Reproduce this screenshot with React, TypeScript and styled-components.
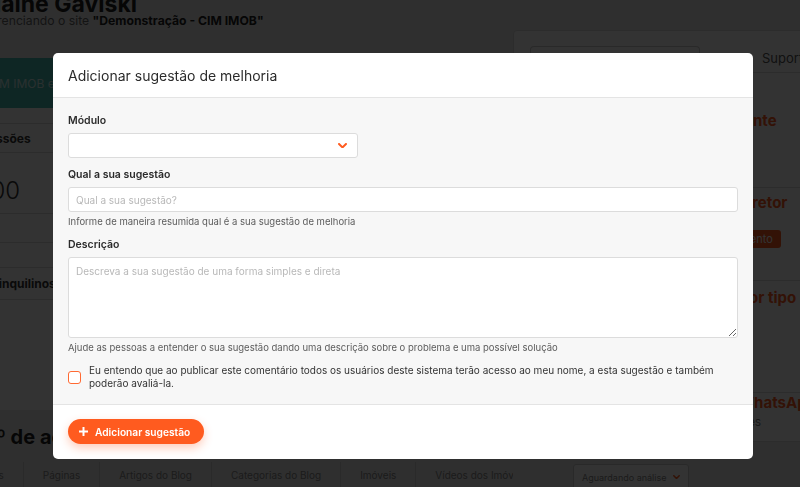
import React from 'react';
import styled, {createGlobalStyle} from 'styled-components';

const GlobalStyle = createGlobalStyle`
  * { box-sizing: border-box; }
  html, body { margin: 0; height: 100%; overflow: hidden; }
  body {
    font-family: Inter, 'Noto Sans', sans-serif;
    background: #ebebeb;
    color: #333;
  }
`;

const ORANGE = '#ff5b1f';

/* ---------- page behind the modal ---------- */

const Page = styled.div`
  display: grid;
  grid-template-columns: 548px 340px;
  margin: -4px 0 0 -35px;
  width: 900px;
`;

const LeftColumn = styled.div`
  padding-left: 16px;
  overflow: hidden;
`;

const Greeting = styled.h1`
  margin: 0;
  font-size: 23px;
  line-height: 17px;
  font-weight: 700;
  color: #222;
`;

const Subtitle = styled.p`
  margin: 0;
  font-size: 12.2px;
  line-height: 16px;
  color: #666;
  strong {
    color: #222;
  }
`;

const Banner = styled.div`
  margin: 29px 0 0 -16px;
  height: 50px;
  padding: 0 22px;
  display: flex;
  align-items: center;
  background: #47bdb5;
  color: rgba(255, 255, 255, 0.75);
  font-size: 12px;
  white-space: nowrap;
`;

const StatsCard = styled.div`
  margin-left: -16px;
  padding: 15px 0 15px 16px;
  background: #fff;
`;

const StatHead = styled.div<{$h?: number}>`
  height: ${(p) => p.$h ?? 30}px;
  display: flex;
  align-items: center;
  border-top: 1px solid #ddd;
  border-bottom: 1px solid #ddd;
  font-size: 12px;
  font-weight: 700;
  white-space: nowrap;
`;

const StatValue = styled.div<{$h: number}>`
  height: ${(p) => p.$h}px;
  padding-top: 14px;
  display: flex;
  align-items: center;
  font-size: 24px;
  font-weight: 300;
`;

const StatFoot = styled.div`
  height: 30px;
  border-top: 1px solid #ddd;
  border-bottom: 1px solid #ddd;
  margin-bottom: 24px;
`;

const SectionTitle = styled.h2`
  margin: 14px 0 4px;
  font-size: 20px;
  line-height: 26px;
  font-weight: 700;
  color: #222;
  white-space: nowrap;
`;

const TabStrip = styled.div`
  display: flex;
  height: 40px;
  margin-left: -35px;
  padding-top: 8px;
  white-space: nowrap;
`;

const Tab = styled.div`
  padding: 6px 19px 0;
  line-height: 14px;
  border-right: 1px solid #d0d0d0;
  font-size: 10px;
  color: #888;
`;

const RightColumn = styled.div`
  margin-top: 34px;
`;

const SideCard = styled.div`
  background: #fff;
  border: 1px solid #ddd;
  border-radius: 4px;
  padding: 0 16px 10px;
`;

const SideTabs = styled.div`
  height: 42px;
  display: flex;
  align-items: flex-end;
  gap: 62px;
  border-bottom: 1px solid #ddd;
`;

const SearchBox = styled.div`
  width: 170px;
  height: 26px;
  border: 1px solid #ccc;
  border-bottom: none;
  border-radius: 4px 4px 0 0;
`;

const SideTab = styled.span`
  padding-bottom: 6px;
  font-size: 13px;
  color: #555;
`;

const SideSection = styled.div<{$h: number; $pt: number; $last?: boolean}>`
  height: ${(p) => p.$h}px;
  padding-top: ${(p) => p.$pt}px;
  border-bottom: ${(p) => (p.$last ? 'none' : '1px solid #ddd')};
`;

const SideTitle = styled.div`
  font-size: 15px;
  line-height: 20px;
  font-weight: 700;
  color: ${ORANGE};
  white-space: nowrap;
`;

const SideText = styled.div`
  font-size: 12px;
  line-height: 18px;
  color: #777;
  white-space: nowrap;
`;

const SideButton = styled.span`
  display: inline-block;
  margin: 17px 0 0 169px;
  height: 18px;
  padding: 0 8px;
  line-height: 18px;
  border-radius: 3px;
  background: ${ORANGE};
  color: #fff;
  font-size: 11px;
`;

const FilterRow = styled.div`
  padding: 22px 0 0 60px;
`;

const FilterSelect = styled.div`
  width: 116px;
  height: 26px;
  display: flex;
  align-items: center;
  justify-content: space-between;
  padding: 0 8px;
  border: 1px solid #ccc;
  border-radius: 3px;
  background: #fff;
  font-size: 9px;
  color: #888;
`;

/* ---------- modal ---------- */

const Overlay = styled.div`
  position: fixed;
  inset: 0;
  background: rgba(0, 0, 0, 0.8);
  padding: 53px 0 0 53px;
`;

const Modal = styled.div`
  width: 700px;
  background: #fff;
  border-radius: 5px;
  overflow: hidden;
`;

const ModalHeader = styled.div`
  height: 45px;
  display: flex;
  align-items: center;
  padding: 0 15px;
  border-bottom: 1px solid #e4e4e4;
`;

const ModalTitle = styled.h2`
  margin: 0;
  font-size: 14px;
  font-weight: 400;
  color: #2b2b2b;
`;

const ModalBody = styled.div`
  background: #f7f7f7;
  padding: 16px 15px 14px;
`;

const Field = styled.div<{$gap?: number}>`
  margin-top: ${(p) => p.$gap ?? 0}px;
`;

const Label = styled.label`
  display: block;
  margin-bottom: 5px;
  font-size: 10.5px;
  line-height: 14px;
  font-weight: 600;
  color: #2b2b2b;
`;

const SelectBox = styled.div`
  width: 290px;
  height: 25px;
  display: flex;
  align-items: center;
  justify-content: flex-end;
  padding-right: 10px;
  background: #fff;
  border: 1px solid #dcdcdc;
  border-radius: 3px;
`;

const TextInput = styled.input`
  display: block;
  width: 100%;
  height: 25px;
  padding: 0 7px;
  background: #fff;
  border: 1px solid #dcdcdc;
  border-radius: 3px;
  font-family: inherit;
  font-size: 10px;
  color: #333;
  outline: none;
  &::placeholder {
    color: #b8b8b8;
  }
`;

const TextArea = styled.textarea`
  display: block;
  width: 100%;
  height: 81px;
  padding: 7px;
  background: #fff;
  border: 1px solid #dcdcdc;
  border-radius: 3px;
  font-family: inherit;
  font-size: 10px;
  color: #333;
  outline: none;
  resize: vertical;
  &::placeholder {
    color: #b8b8b8;
  }
`;

const Help = styled.div`
  margin-top: 3px;
  font-size: 9.5px;
  line-height: 13px;
  color: #5c5c5c;
`;

const ConsentRow = styled.label`
  margin-top: 10px;
  display: flex;
  align-items: center;
  gap: 8px;
`;

const CheckBox = styled.span`
  flex: none;
  width: 13px;
  height: 13px;
  border: 1.5px solid #ff6a33;
  border-radius: 3px;
  background: #fff;
`;

const ConsentText = styled.span`
  font-size: 10px;
  line-height: 13px;
  color: #333;
`;

const ModalFooter = styled.div`
  border-top: 1px solid #e4e4e4;
  padding: 14px 15px 15px;
`;

const SubmitButton = styled.button`
  display: inline-flex;
  align-items: center;
  gap: 7px;
  height: 25px;
  padding: 0 14px 0 11px;
  border: none;
  border-radius: 13px;
  background: ${ORANGE};
  color: #fff;
  font-family: inherit;
  font-size: 10.2px;
  font-weight: 600;
  box-shadow: 0 4px 10px rgba(255, 91, 31, 0.3);
  cursor: pointer;
`;

const Chevron = ({size = 9}: {size?: number}) => (
  <svg width={size} height={size * 0.66} viewBox="0 0 9 6" fill="none">
    <path d="M1 1l3.5 3.5L8 1" stroke={ORANGE} strokeWidth="2" strokeLinecap="round" strokeLinejoin="round" />
  </svg>
);

const PlusIcon = () => (
  <svg width="9" height="9" viewBox="0 0 9 9" fill="none">
    <path d="M4.5 0.5v8M0.5 4.5h8" stroke="#fff" strokeWidth="2" strokeLinecap="round" />
  </svg>
);

export default function App() {
  return (
    <>
      <GlobalStyle />
      <Page>
        <LeftColumn>
          <Greeting>Elaine Gaviski</Greeting>
          <Subtitle>
            Gerenciando o site <strong>"Demonstração - CIM IMOB"</strong>
          </Subtitle>
          <Banner>CIM IMOB e gerencie o seu site</Banner>
          <StatsCard>
            <StatHead>Sessões</StatHead>
            <StatValue $h={60}>100</StatValue>
            <StatFoot />
            <StatHead $h={33}>Nº inquilinos</StatHead>
            <StatValue $h={95} />
          </StatsCard>
          <SectionTitle>Nº de acessos</SectionTitle>
          <TabStrip>
            <Tab>Banners</Tab>
            <Tab>Páginas</Tab>
            <Tab>Artigos do Blog</Tab>
            <Tab>Categorias do Blog</Tab>
            <Tab>Imóveis</Tab>
            <Tab>Vídeos dos Imóveis</Tab>
          </TabStrip>
        </LeftColumn>
        <RightColumn>
          <SideCard>
            <SideTabs>
              <SearchBox />
              <SideTab>Suporte</SideTab>
            </SideTabs>
            <SideSection $h={115} $pt={38}>
              <SideTitle>Entre em contato com um gerente</SideTitle>
            </SideSection>
            <SideSection $h={93} $pt={5}>
              <SideTitle>Índice de desempenho por corretor</SideTitle>
              <SideButton>Atendimento</SideButton>
            </SideSection>
            <SideSection $h={112} $pt={7}>
              <SideTitle>Quantidade de seus imóveis por tipo</SideTitle>
            </SideSection>
            <SideSection $h={38} $pt={0} $last>
              <SideTitle>Participe do nosso grupo no WhatsApp</SideTitle>
              <SideText>Receba dica, novidades e oportunidades</SideText>
            </SideSection>
          </SideCard>
          <FilterRow>
            <FilterSelect>
              Aguardando análise
              <Chevron size={7} />
            </FilterSelect>
          </FilterRow>
        </RightColumn>
      </Page>

      <Overlay>
        <Modal>
          <ModalHeader>
            <ModalTitle>Adicionar sugestão de melhoria</ModalTitle>
          </ModalHeader>
          <ModalBody>
            <Field>
              <Label>Módulo</Label>
              <SelectBox>
                <Chevron />
              </SelectBox>
            </Field>
            <Field $gap={10}>
              <Label>Qual a sua sugestão</Label>
              <TextInput placeholder="Qual a sua sugestão?" />
              <Help>Informe de maneira resumida qual é a sua sugestão de melhoria</Help>
            </Field>
            <Field $gap={10}>
              <Label>Descrição</Label>
              <TextArea placeholder="Descreva a sua sugestão de uma forma simples e direta" />
              <Help>
                Ajude as pessoas a entender o sua sugestão dando uma descrição sobre o problema e uma possível solução
              </Help>
            </Field>
            <ConsentRow>
              <CheckBox />
              <ConsentText>
                Eu entendo que ao publicar este comentário todos os usuários deste sistema terão acesso ao meu nome, a
                esta sugestão e também poderão avaliá-la.
              </ConsentText>
            </ConsentRow>
          </ModalBody>
          <ModalFooter>
            <SubmitButton type="button">
              <PlusIcon />
              Adicionar sugestão
            </SubmitButton>
          </ModalFooter>
        </Modal>
      </Overlay>
    </>
  );
}
